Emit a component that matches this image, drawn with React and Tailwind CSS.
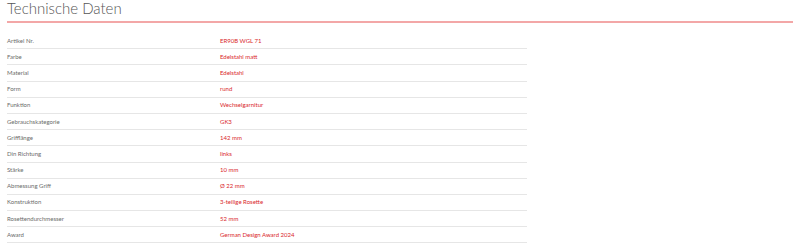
export default function App() {
  const rows = [
    ["Artikel Nr.", "ER90B WGL 71"],
    ["Farbe", "Edelstahl matt"],
    ["Material", "Edelstahl"],
    ["Form", "rund"],
    ["Funktion", "Wechselgarnitur"],
    ["Gebrauchskategorie", "GK3"],
    ["Grifflänge", "142 mm"],
    ["Din Richtung", "links"],
    ["Stärke", "10 mm"],
    ["Abmessung Griff", "Ø 22 mm"],
    ["Konstruktion", "3-teilige Rosette"],
    ["Rosettendurchmesser", "52 mm"],
    ["Award", "German Design Award 2024"],
  ];
  return (
    <div className="w-[800px] h-[243px] bg-white overflow-hidden pl-[7px] pr-[7px]" style={{ fontFamily: "Lato, 'Noto Sans', sans-serif" }}>
      <div className="border-b-2 border-[#f3a7a7] h-[23px]">
        <h2 className="text-[15px] leading-[17px] font-light text-[#555]">Technische Daten</h2>
      </div>
      <div className="w-[520px] mt-[10px]">
        {rows.map(([k, v], i) => (
          <div key={i} className="flex items-center h-[16.2px] border-b border-[#e6e6e6] text-[6px] leading-[8px]">
            <div className="w-[213px] text-[#6b6b6b]">{k}</div>
            <div className="text-[#d9262a]">{v}</div>
          </div>
        ))}
      </div>
    </div>
  );
}
